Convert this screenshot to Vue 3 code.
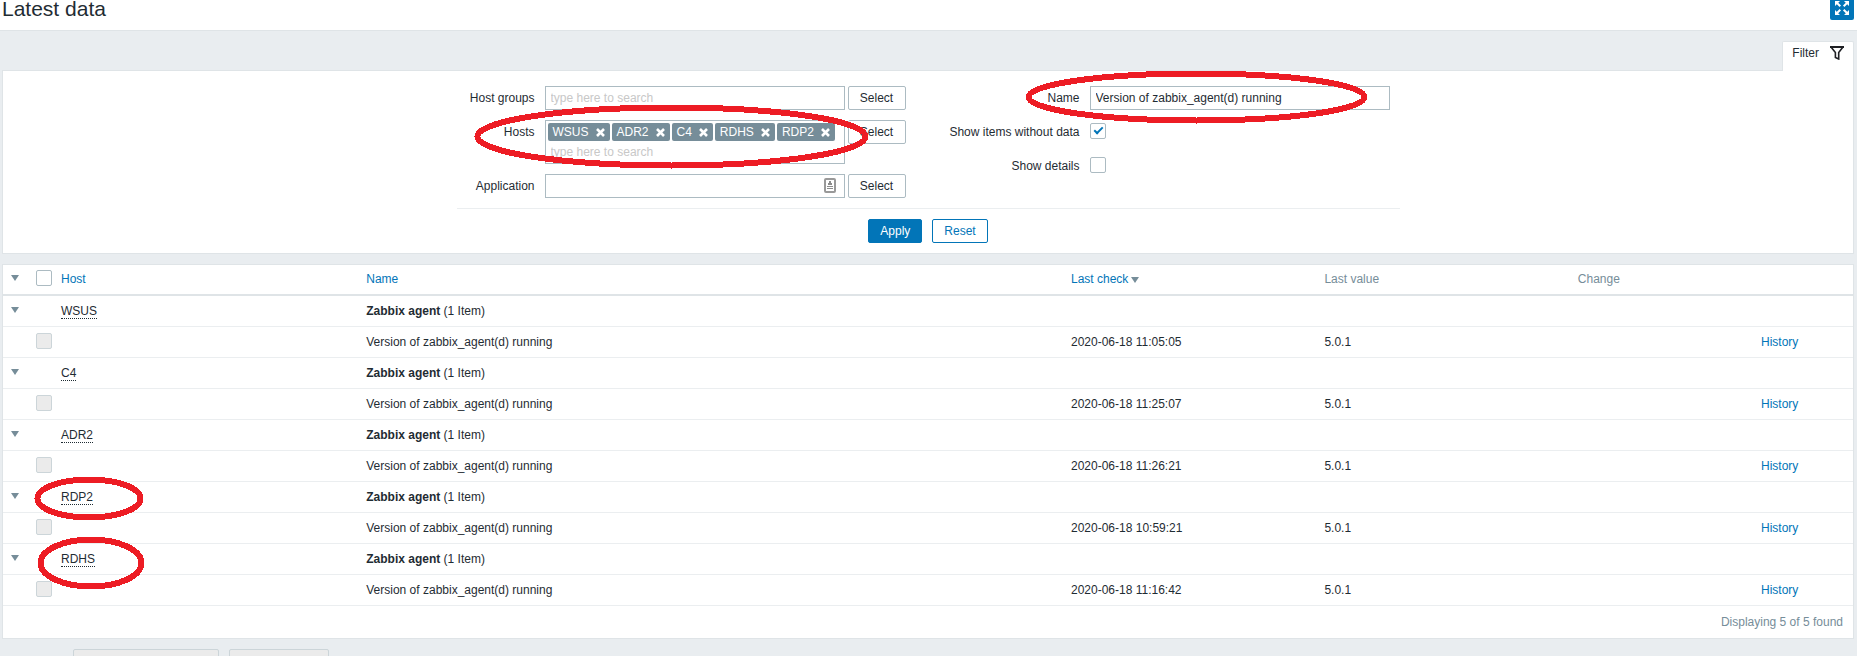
<script setup>
import { ref } from 'vue'

const selectedHosts = ref(['WSUS', 'ADR2', 'C4', 'RDHS', 'RDP2'])
const itemName = ref('Version of zabbix_agent(d) running')
const withoutData = ref(true)
const showDetails = ref(false)

const rows = [
  { host: 'WSUS', check: '2020-06-18 11:05:05', value: '5.0.1' },
  { host: 'C4', check: '2020-06-18 11:25:07', value: '5.0.1' },
  { host: 'ADR2', check: '2020-06-18 11:26:21', value: '5.0.1' },
  { host: 'RDP2', check: '2020-06-18 10:59:21', value: '5.0.1', mark: 'mark-rdp' },
  { host: 'RDHS', check: '2020-06-18 11:16:42', value: '5.0.1', mark: 'mark-rdhs' },
]

function removeHost(host) {
  selectedHosts.value = selectedHosts.value.filter((h) => h !== host)
}
</script>

<template>
  <div class="page">
    <header class="title-bar">
      <h1>Latest data</h1>
      <button class="fullscreen" type="button">
        <svg width="14" height="14" viewBox="0 0 14 14" fill="#fff" stroke="#fff" stroke-width="2">
          <path stroke="none" d="M0 0h5L0 5zM14 0v5L9 0zM0 14V9l5 5zM14 14H9l5-5z" />
          <path d="M1 1l4.3 4.3M13 1L8.7 5.3M1 13l4.3-4.3M13 13L8.7 8.7" />
        </svg>
      </button>
    </header>

    <main>
      <div class="tabs">
        <a class="tab" href="#filter">
          Filter
          <svg width="14" height="14" viewBox="0 0 14 14" fill="none" stroke="#1f2024">
            <path stroke-width="2" d="M0 1h14" />
            <path stroke-width="1.6" d="M1 1l4.4 5.6v4.8L8.7 13V6.600L13 1" />
          </svg>
        </a>
      </div>

      <form id="filter" class="filter" @submit.prevent>
        <div class="form">
          <div class="columns">
            <div class="fields left">
              <label for="groups">Host groups</label>
              <div class="control">
                <input id="groups" class="text" type="text" placeholder="type here to search" />
                <button class="btn select" type="button">Select</button>
              </div>

              <label for="hosts">Hosts</label>
              <div class="control">
                <div class="multi">
                  <ul>
                    <li v-for="h in selectedHosts" :key="h">
                      <span>{{ h }}</span>
                      <button type="button" @click="removeHost(h)">
                        <svg width="9" height="9" viewBox="0 0 9 9" stroke="#fff" stroke-width="2.6">
                          <path d="M1 1l7 7M8 1L1 8" />
                        </svg>
                      </button>
                    </li>
                  </ul>
                  <input id="hosts" type="text" placeholder="type here to search" />
                </div>
                <button class="btn select" type="button">Select</button>
              </div>

              <label for="application">Application</label>
              <div class="control">
                <div class="with-icon">
                  <input id="application" class="text" type="text" />
                  <svg class="card" width="12" height="15" viewBox="0 0 12 15">
                    <rect x="1" y="1" width="10" height="13" rx="1" fill="#fff" stroke="#999" stroke-width="2" />
                    <path fill="#8c8c8c" d="M5 3h2v2h1v2H4V5h1zM3 8h6v1H3zM3 10h6v1H3z" />
                  </svg>
                </div>
                <button class="btn select" type="button">Select</button>
              </div>
            </div>

            <div class="fields right">
              <label for="name">Name</label>
              <input id="name" v-model="itemName" class="text" type="text" />
              <label for="nodata">Show items without data</label>
              <input id="nodata" v-model="withoutData" type="checkbox" />
              <label for="details">Show details</label>
              <input id="details" v-model="showDetails" type="checkbox" />
            </div>
          </div>

          <div class="actions">
            <button class="btn primary" type="submit">Apply</button>
            <button class="btn outline" type="reset">Reset</button>
          </div>

          <svg class="mark mark-hosts" width="393" height="63" viewBox="0 0 393 63">
            <ellipse cx="196.5" cy="31.5" rx="194" ry="29" />
          </svg>
          <svg class="mark mark-name" width="341" height="52" viewBox="0 0 341 52">
            <ellipse cx="170.5" cy="26" rx="168" ry="23.5" />
          </svg>
        </div>
      </form>

      <section class="panel">
        <table>
          <colgroup>
            <col class="c-arrow" />
            <col class="c-check" />
            <col class="c-host" />
            <col />
            <col class="c-time" />
            <col class="c-time" />
            <col class="c-change" />
            <col class="c-link" />
          </colgroup>
          <thead>
            <tr>
              <th><button class="toggle" type="button"><i class="arrow"></i></button></th>
              <th><input type="checkbox" /></th>
              <th><a href="#host">Host</a></th>
              <th><a href="#name">Name</a></th>
              <th><a href="#check">Last check<i class="arrow sort"></i></a></th>
              <th>Last value</th>
              <th>Change</th>
              <th></th>
            </tr>
          </thead>
          <tbody>
            <template v-for="r in rows" :key="r.host">
              <tr>
                <td><button class="toggle" type="button"><i class="arrow"></i></button></td>
                <td></td>
                <td class="host">
                  <a href="#menu">{{ r.host }}</a>
                  <svg v-if="r.mark === 'mark-rdp'" class="mark mark-rdp" width="108" height="43" viewBox="0 0 108 43">
                    <ellipse cx="54" cy="21.5" rx="51.5" ry="19" />
                  </svg>
                  <svg v-if="r.mark === 'mark-rdhs'" class="mark mark-rdhs" width="106" height="52" viewBox="0 0 106 52">
                    <ellipse cx="53" cy="26" rx="50.5" ry="23.5" />
                  </svg>
                </td>
                <td colspan="5"><b>Zabbix agent</b> (1 Item)</td>
              </tr>
              <tr>
                <td></td>
                <td><input type="checkbox" disabled /></td>
                <td></td>
                <td>Version of zabbix_agent(d) running</td>
                <td>{{ r.check }}</td>
                <td>{{ r.value }}</td>
                <td></td>
                <td><a href="#history">History</a></td>
              </tr>
            </template>
          </tbody>
        </table>
        <div class="total">Displaying 5 of 5 found</div>
      </section>

      <div class="bulk">
        <button class="wide" type="button" disabled></button>
        <button type="button" disabled></button>
      </div>
    </main>
  </div>
</template>

<style>
body {
  margin: 0;
  background: #e9edf0;
}
</style>

<style scoped>
.page {
  height: 100vh;
  overflow: hidden;
  color: #1f2c33;
  font: 12px/14px "Liberation Sans", Arial, sans-serif;
}
*,
*::before {
  box-sizing: border-box;
}
a {
  color: #0275b8;
  text-decoration: none;
}
button,
input {
  margin: 0;
  font: inherit;
  color: inherit;
}
svg {
  display: block;
}
.title-bar {
  display: flex;
  justify-content: space-between;
  height: 31px;
  padding: 0 3px 0 2px;
  background: #fff;
  border-bottom: 1px solid #dfe4e7;
}
h1 {
  margin: 0;
  font-size: 21px;
  line-height: 18px;
  font-weight: 400;
}
.fullscreen {
  display: flex;
  justify-content: center;
  width: 24px;
  height: 20px;
  padding: 1px 0 0;
  border: 0;
  border-radius: 0 0 2px 2px;
  background: #0275b8;
}
main {
  padding: 10px 3px 0 2px;
}
.tabs {
  display: flex;
  justify-content: flex-end;
}
.tab {
  display: flex;
  align-items: center;
  gap: 11px;
  height: 30px;
  padding: 0 9px 8px;
  margin-bottom: -1px;
  position: relative;
  background: #fff;
  border: 1px solid #dfe4e7;
  border-bottom: 0;
  border-radius: 2px 2px 0 0;
  color: #1f2c33;
}
.filter,
.panel {
  background: #fff;
  border: 1px solid #dfe4e7;
}
.filter {
  padding: 15px 10px 10px;
}
.form {
  position: relative;
  max-width: 943px;
  margin: 0 auto;
}
.columns {
  display: flex;
  justify-content: space-between;
  padding-bottom: 10px;
  border-bottom: 1px solid #ebeef0;
}
.fields {
  display: grid;
  gap: 10px;
  align-items: start;
  align-content: start;
}
.left {
  grid-template-columns: 78px auto;
}
.right {
  grid-template-columns: auto 300px;
  grid-auto-rows: 24px;
  padding-right: 10px;
}
.right input[type="checkbox"] {
  align-self: center;
}
label {
  line-height: 24px;
  text-align: right;
  white-space: nowrap;
}
.control {
  display: flex;
  align-items: flex-start;
  gap: 3px;
}
.text,
.multi {
  width: 300px;
  background: #fff;
  border: 1px solid #acbbc2;
  border-radius: 0;
}
.text {
  height: 24px;
  padding: 0 5px;
}
.multi {
  padding: 2px 2px 0;
}
.multi ul {
  display: flex;
  gap: 2px;
  margin: 0;
  padding: 0;
  list-style: none;
}
.multi li {
  display: flex;
  align-items: center;
  gap: 7px;
  height: 18px;
  padding: 0 5px;
  border-radius: 2px;
  background: #768d99;
  color: #fff;
}
.multi li button {
  padding: 0;
  border: 0;
  background: none;
}
.multi input {
  display: block;
  width: 100%;
  height: 22px;
  padding: 0 3px;
  border: 0;
  background: none;
}
input::placeholder {
  color: #c8c8c8;
}
.with-icon {
  position: relative;
}
.card {
  position: absolute;
  top: 4px;
  right: 9px;
}
.btn {
  height: 24px;
  padding: 0 11px;
  background: #fff;
  border: 1px solid #acbbc2;
  border-radius: 2px;
}
.select {
  width: 58px;
}
.primary {
  background: #0275b8;
  border-color: #0275b8;
  color: #fff;
}
.outline {
  border-color: #0275b8;
  color: #0275b8;
}
.actions {
  display: flex;
  justify-content: center;
  gap: 10px;
  padding-top: 10px;
}
input[type="checkbox"] {
  display: block;
  appearance: none;
  position: relative;
  width: 16px;
  height: 16px;
  margin-bottom: 2px;
  background: #fff;
  border: 1px solid #acbbc2;
  border-radius: 2px;
}
input[type="checkbox"]:checked::before {
  content: "";
  position: absolute;
  top: 3px;
  left: 3px;
  width: 9px;
  height: 5px;
  border: solid #0275b8;
  border-width: 0 0 2px 2px;
  transform: rotate(-45deg);
}
input[type="checkbox"]:disabled {
  background: #ebebeb;
  border-color: #ccd5d9;
}
.mark {
  position: absolute;
  overflow: visible;
  pointer-events: none;
  fill: none;
  stroke: #ed1c24;
  stroke-width: 6px;
  shape-rendering: crispEdges;
}
.mark-hosts {
  left: 18px;
  top: 19px;
}
.mark-name {
  right: 33px;
  top: -15px;
}
.mark-rdp {
  left: -21px;
  top: -5px;
}
.mark-rdhs {
  left: -18px;
  top: -7px;
}
.panel {
  margin-top: 10px;
}
table {
  width: 100%;
  table-layout: fixed;
  border-collapse: separate;
  border-spacing: 0;
}
.c-arrow {
  width: 28px;
}
.c-check {
  width: 25px;
}
.c-host {
  width: 16.5%;
}
.c-time {
  width: 13.7%;
}
.c-change {
  width: 9.9%;
}
.c-link {
  width: 97px;
}
th,
td {
  height: 31px;
  padding: 0 5px;
  border-bottom: 1px solid #ebeef0;
  text-align: left;
  vertical-align: middle;
  font-weight: 400;
}
th {
  padding-bottom: 2px;
  border-bottom: 2px solid #dfe4e7;
  color: #768d99;
}
.host {
  position: relative;
}
.host a {
  color: #1f2c33;
  border-bottom: 1px dotted #1f2c33;
}
.toggle {
  display: block;
  margin-bottom: 2px;
  padding: 0 3px;
  border: 0;
  background: none;
}
.arrow {
  display: block;
  width: 8px;
  border: solid transparent;
  border-width: 6px 4px 0;
  border-top-color: #768d99;
}
.sort {
  display: inline-block;
  margin-left: 3px;
}
.total {
  padding: 9px 10px;
  text-align: right;
  color: #768d99;
}
.bulk {
  display: flex;
  gap: 10px;
  padding: 10px 71px;
}
.bulk button {
  width: 100px;
  height: 24px;
  background: #ebebeb;
  border: 1px solid #ccd5d9;
  border-radius: 2px;
}
.bulk .wide {
  width: 146px;
}
</style>
